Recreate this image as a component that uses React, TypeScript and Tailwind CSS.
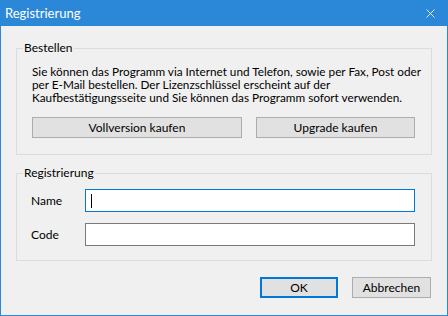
import { X } from "lucide-react";

const font = { fontFamily: 'Lato, "Noto Sans", sans-serif' };

function GroupBox({ title, className, children }: { title: string; className?: string; children: React.ReactNode }) {
  return (
    <div className={`relative border border-[#dcdcdc] ${className ?? ""}`}>
      <span className="absolute -top-[9px] left-[6px] bg-[#f0f0f0] px-[1px] text-[12px] leading-[16px] text-black">
        {title}
      </span>
      {children}
    </div>
  );
}

export default function App() {
  return (
    <div
      className="flex h-[316px] w-[448px] flex-col border-x border-b border-[#2b88d8] bg-[#f0f0f0] text-[12px] text-black"
      style={font}
    >
      {/* title bar */}
      <div className="-mx-px flex h-[26px] shrink-0 items-center justify-between bg-[#2b88d8] pl-[5px] pr-[10px] text-white">
        <span className="text-[13px] leading-none">Registrierung</span>
        <X className="h-[15px] w-[15px]" strokeWidth={1.3} />
      </div>

      <div className="flex flex-col px-[15px] pt-[22px]">
        <GroupBox title="Bestellen" className="h-[107px] pl-[15px] pt-[16px]">
          <p className="whitespace-nowrap text-[11.75px] leading-[13px]">
            Sie können das Programm via Internet und Telefon, sowie per Fax, Post oder
            <br />
            per E-Mail bestellen. Der Lizenzschlüssel erscheint auf der
            <br />
            Kaufbestätigungsseite und Sie können das Programm sofort verwenden.
          </p>
          <div className="mt-[13px] flex gap-[14px]">
            <button className="h-[21px] w-[210px] border border-[#adadad] bg-[#e1e1e1] leading-none">
              Vollversion kaufen
            </button>
            <button className="h-[21px] w-[159px] border border-[#adadad] bg-[#e1e1e1] leading-none">
              Upgrade kaufen
            </button>
          </div>
        </GroupBox>

        <GroupBox title="Registrierung" className="mt-[18px] h-[88px] pl-[14px] pr-[16px] pt-[15px]">
          <div className="flex flex-col gap-[11px]">
            <div className="flex items-center">
              <span className="w-[54px]">Name</span>
              <div className="flex h-[23px] flex-1 items-center border border-[#0078d7] bg-white pl-[5px]">
                <span className="h-[14px] w-px bg-black" />
              </div>
            </div>
            <div className="flex items-center">
              <span className="w-[54px]">Code</span>
              <div className="h-[23px] flex-1 border border-[#7a7a7a] bg-white" />
            </div>
          </div>
        </GroupBox>
      </div>

      <div className="flex justify-end gap-[14px] pr-[16px] pt-[16px]">
        <button className="h-[21px] w-[78px] border-2 border-[#0078d7] bg-[#e1e1e1] leading-none">OK</button>
        <button className="h-[21px] w-[79px] border border-[#adadad] bg-[#e1e1e1] leading-none">Abbrechen</button>
      </div>
    </div>
  );
}
